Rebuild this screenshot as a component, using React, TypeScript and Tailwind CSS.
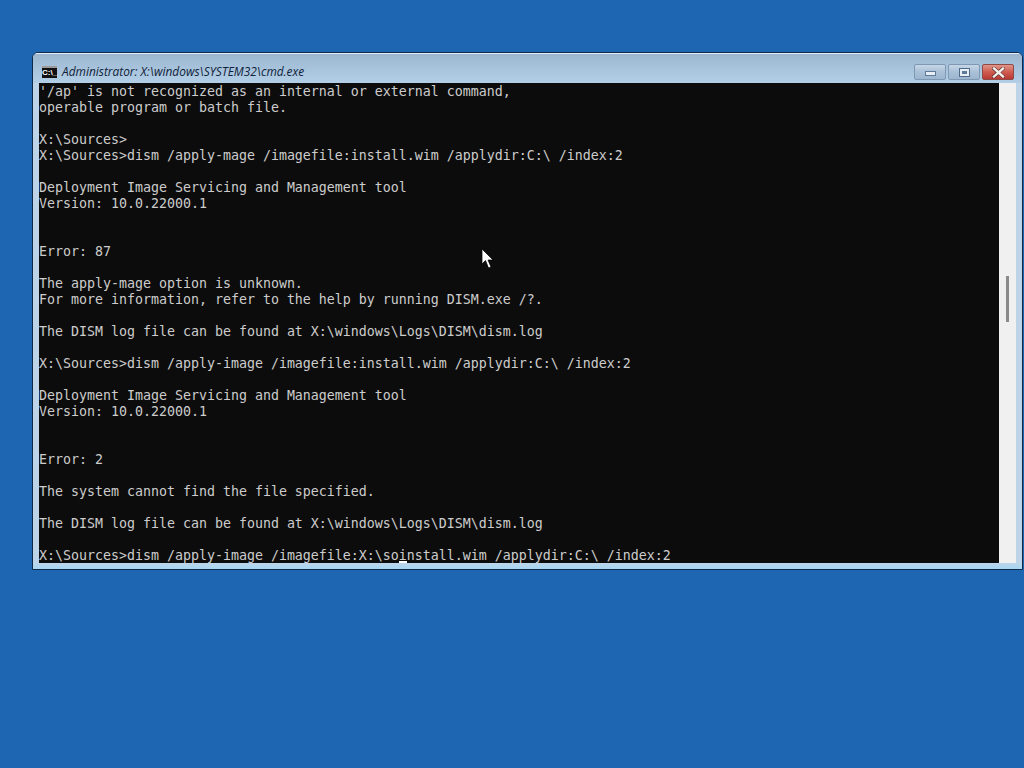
const LINES = [
  "'/ap' is not recognized as an internal or external command,",
  "operable program or batch file.",
  "",
  "X:\\Sources>",
  "X:\\Sources>dism /apply-mage /imagefile:install.wim /applydir:C:\\ /index:2",
  "",
  "Deployment Image Servicing and Management tool",
  "Version: 10.0.22000.1",
  "",
  "",
  "Error: 87",
  "",
  "The apply-mage option is unknown.",
  "For more information, refer to the help by running DISM.exe /?.",
  "",
  "The DISM log file can be found at X:\\windows\\Logs\\DISM\\dism.log",
  "",
  "X:\\Sources>dism /apply-image /imagefile:install.wim /applydir:C:\\ /index:2",
  "",
  "Deployment Image Servicing and Management tool",
  "Version: 10.0.22000.1",
  "",
  "",
  "Error: 2",
  "",
  "The system cannot find the file specified.",
  "",
  "The DISM log file can be found at X:\\windows\\Logs\\DISM\\dism.log",
  "",
];

function CmdIcon() {
  return (
    <div className="w-[15px] h-[12px] bg-[#111] border-t-[2px] border-[#9a9a9a] flex items-center justify-center">
      <span className="text-[8px] leading-none font-bold text-white font-['Liberation_Sans',sans-serif]">C:\_</span>
    </div>
  );
}

function TitleButtons() {
  return (
    <div className="flex gap-[2px]">
      {/* Minimize */}
      <div className="w-[32px] h-[16px] rounded-[2px] border border-[#7f98b3] bg-gradient-to-b from-[#c6d6e6] via-[#a9c0d7] to-[#9db6cf] flex items-end justify-center pb-[3px]">
        <div className="w-[11px] h-[5px] bg-[#e8eef5] border border-[#5d7a99]" />
      </div>
      {/* Maximize */}
      <div className="w-[32px] h-[16px] rounded-[2px] border border-[#7f98b3] bg-gradient-to-b from-[#c6d6e6] via-[#a9c0d7] to-[#9db6cf] flex items-center justify-center">
        <div className="w-[11px] h-[9px] bg-[#e8eef5] border border-[#4e6b8a] flex items-center justify-center">
          <div className="w-[5px] h-[3px] bg-[#5d7a99]" />
        </div>
      </div>
      {/* Close */}
      <div className="w-[32px] h-[16px] rounded-[2px] border border-[#8f4a46] bg-gradient-to-b from-[#e0968a] via-[#cf5b50] to-[#b83a34] flex items-center justify-center">
        <svg width="13" height="11" viewBox="0 0 13 11">
          <path d="M2 1.5 L11 9.5 M11 1.5 L2 9.5" stroke="#4d2b2b" strokeWidth="3.6" strokeLinecap="square" />
          <path d="M2 1.5 L11 9.5 M11 1.5 L2 9.5" stroke="#f4efe9" strokeWidth="2.4" strokeLinecap="square" />
        </svg>
      </div>
    </div>
  );
}

export default function App() {
  return (
    <div className="relative w-[1024px] h-[768px] overflow-hidden bg-[#1e65b2] pt-[52px] pl-[32px]">
      {/* cmd window */}
      <div className="w-[991px] h-[518px] rounded-t-[6px] border border-[#0d2a4a] bg-[#bcd3e8] flex flex-col overflow-hidden">
        <div className="h-[30px] shrink-0 pl-[9px] pr-[8px] flex items-center justify-between border-t border-[#e6eef6] bg-gradient-to-b from-[#9cb6d0] to-[#b3cfe7]">
          <div className="flex items-center gap-[5px] pt-[6px]">
            <CmdIcon />
            <span className="italic text-[11.9px] leading-none text-[#0f2238] font-['Open_Sans',sans-serif]">
              Administrator: X:\windows\SYSTEM32\cmd.exe
            </span>
          </div>
          <div className="pt-[7px]">
            <TitleButtons />
          </div>
        </div>
        <div className="flex h-[480px] shrink-0 pl-[6px] pr-[6px]">
          {/* console */}
          <div className="w-[960px] h-[480px] bg-[#0c0c0c] text-[#cccccc] font-['DejaVu_Sans_Mono',monospace] text-[13.29px] leading-[18px] whitespace-pre overflow-hidden">
            {LINES.map((line, i) => (
              <div key={i} className="h-[16px]">
                {line}
              </div>
            ))}
            <div className="h-[16px]">
              {"X:\\Sources>dism /apply-image /imagefile:X:\\so"}
              <span className="relative">
                i
                <span className="absolute left-0 bottom-[-1px] w-[8px] h-[3px] bg-white" />
              </span>
              {"nstall.wim /applydir:C:\\ /index:2"}
            </div>
          </div>
          {/* scrollbar */}
          <div className="w-[17px] bg-[#f0f0f0] pt-[193px] flex justify-center">
            <div className="w-[3px] h-[46px] bg-[#8a8a8a]" />
          </div>
        </div>
        <div className="flex-1 bg-gradient-to-b from-[#bcd6ea] to-[#a5d5f2]" />
      </div>
      {/* mouse pointer */}
      <svg className="absolute left-[481px] top-[248px]" width="13" height="22" viewBox="0 0 13 22">
        <path d="M1 1 L1 16 L4.5 12.5 L7.5 20 L10 19 L7 12 L12 12 Z" fill="#fff" stroke="#000" strokeWidth="0.7" />
      </svg>
    </div>
  );
}
